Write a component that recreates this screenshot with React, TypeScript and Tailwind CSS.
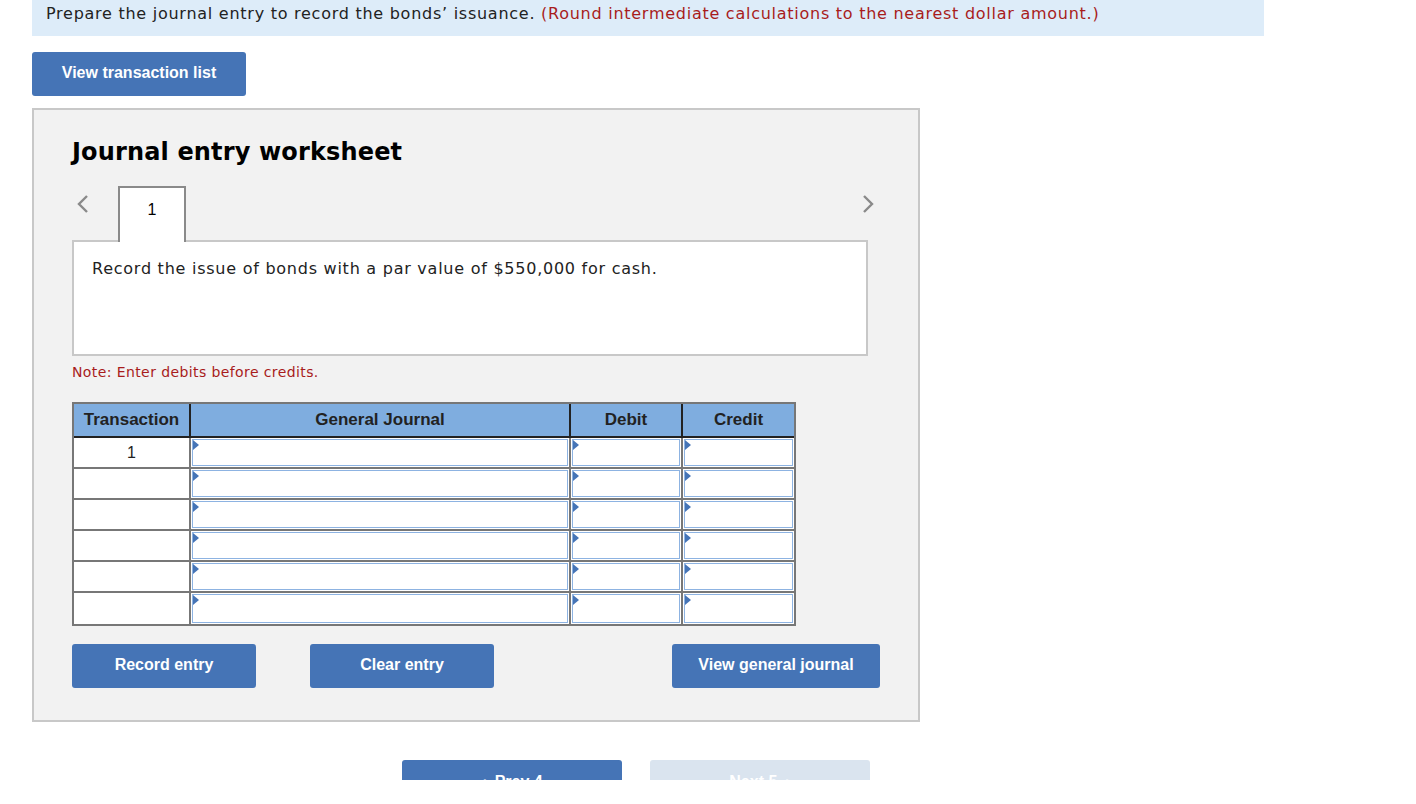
const verdana = { fontFamily: '"DejaVu Sans", Verdana, sans-serif' };

function Cell() {
  return (
    <div className="relative h-full border border-[#8db3e2] bg-white">
      <span className="absolute left-0 top-0 h-0 w-0 border-y-[5px] border-l-[6px] border-y-transparent border-l-[#4574b6]" />
    </div>
  );
}

export default function App() {
  const rows = [1, 2, 3, 4, 5, 6];
  return (
    <div className="h-[780px] overflow-hidden bg-white text-black">
      <div className="ml-8 h-9 w-[1232px] bg-[#ddecf9] px-[14px] pt-[1px] text-[16px] leading-[26px] tracking-[0.74px] text-[#222]" style={verdana}>
        Prepare the journal entry to record the bonds’ issuance.{' '}
        <span className="text-[#a81c1c]">(Round intermediate calculations to the nearest dollar amount.)</span>
      </div>

      <div className="ml-8 mt-4">
        <button className="h-11 w-[214px] rounded-[3px] bg-[#4574b6] pb-[3px] font-['Liberation_Sans',Arial,sans-serif] text-[16px] font-bold text-white">
          View transaction list
        </button>
      </div>

      <div className="ml-8 mt-3 h-[614px] w-[888px] border-2 border-[#c8c8c8] bg-[#f2f2f2] px-[38px] pt-[24px]">
        <h2 className="text-[24px] font-bold leading-[36px] tracking-[0.15px]" style={verdana}>Journal entry worksheet</h2>

        <div className="relative mt-[16px] h-[54px]">
          <svg className="absolute left-[4px] top-[8px]" width="14" height="20" viewBox="0 0 14 20">
            <path d="M11 2 L3 10 L11 18" fill="none" stroke="#8a8a8a" strokeWidth="2.4" />
          </svg>
          <div className="absolute left-[46px] top-0 flex h-[56px] w-[68px] items-start justify-center border-2 border-b-0 border-[#8a8a8a] bg-white pt-[10px] font-['Liberation_Sans',Arial,sans-serif] text-[16px]">
            1
          </div>
          <svg className="absolute left-[789px] top-[8px]" width="14" height="20" viewBox="0 0 14 20">
            <path d="M3 2 L11 10 L3 18" fill="none" stroke="#8a8a8a" strokeWidth="2.4" />
          </svg>
        </div>

        <div className="h-[116px] w-[796px] border-2 border-[#c8c8c8] bg-white px-[18px] pt-[14px] text-[16px] leading-[26px] tracking-[0.75px] text-[#222]" style={verdana}>
          Record the issue of bonds with a par value of $550,000 for cash.
        </div>

        <p className="mt-[6px] text-[14px] leading-[20px] tracking-[0.4px] text-[#a81c1c]" style={verdana}>Note: Enter debits before credits.</p>

        <div className="mt-[20px] w-[724px] border-2 border-[#777] font-['Liberation_Sans',Arial,sans-serif]">
          <div className="grid h-[34px] grid-cols-[117px_380px_112px_111px] bg-[#7faddf] text-[17px] font-bold text-[#222]">
            <div className="flex items-center justify-center border-b-2 border-r-2 border-[#222]">Transaction</div>
            <div className="flex items-center justify-center border-b-2 border-r-2 border-[#222]">General Journal</div>
            <div className="flex items-center justify-center border-b-2 border-r-2 border-[#222]">Debit</div>
            <div className="flex items-center justify-center border-b-2 border-[#222]">Credit</div>
          </div>
          {rows.map((r, i) => (
            <div key={r} className={`grid h-[31px] grid-cols-[117px_380px_112px_111px] bg-white ${i < rows.length - 1 ? 'border-b-2 border-[#777]' : ''}`}>
              <div className="flex items-start justify-center border-r-2 border-[#777] pt-[3px] text-[16px] text-[#222]">{i === 0 ? '1' : ''}</div>
              <div className="border-r-2 border-[#777] px-[1px] py-[1px]"><Cell /></div>
              <div className="border-r-2 border-[#777] px-[1px] py-[1px]"><Cell /></div>
              <div className="px-[1px] py-[1px]"><Cell /></div>
            </div>
          ))}
        </div>

        <div className="mt-[18px] flex font-['Liberation_Sans',Arial,sans-serif] text-[16px] font-bold text-white">
          <button className="h-11 w-[184px] rounded-[3px] bg-[#4574b6] pb-[3px]">Record entry</button>
          <button className="ml-[54px] h-11 w-[184px] rounded-[3px] bg-[#4574b6] pb-[3px]">Clear entry</button>
          <button className="ml-[178px] h-11 w-[208px] rounded-[3px] bg-[#4574b6] pb-[3px]">View general journal</button>
        </div>
      </div>

      <div className="ml-[402px] mt-[38px] flex gap-[28px] font-['Liberation_Sans',Arial,sans-serif] text-[16px] font-bold">
        <button className="flex h-11 w-[220px] items-center justify-center gap-2 rounded-[3px] bg-[#4574b6] text-white">
          <span>‹</span> Prev 4
        </button>
        <button className="flex h-11 w-[220px] items-center justify-center gap-2 rounded-[3px] bg-[#dae4ef] text-white">
          Next 5 <span>›</span>
        </button>
      </div>
    </div>
  );
}
